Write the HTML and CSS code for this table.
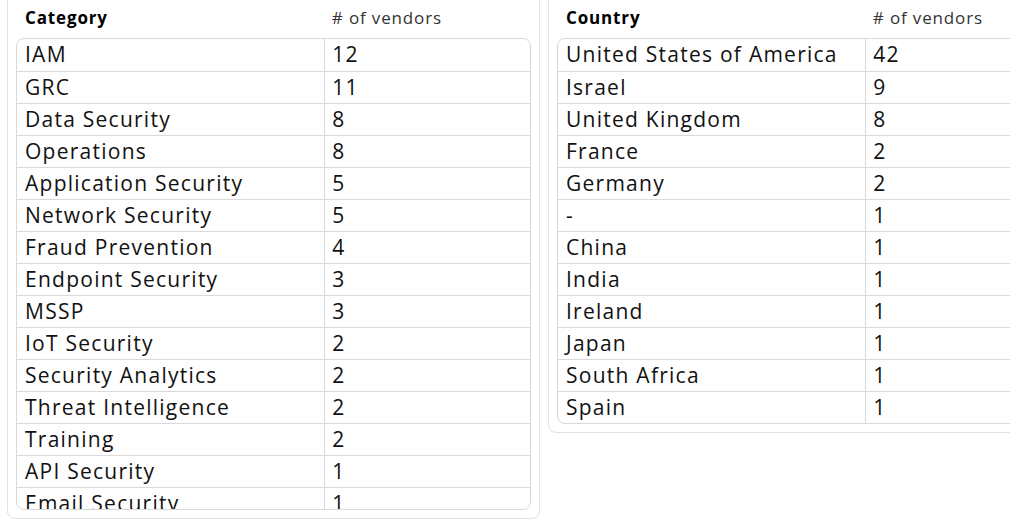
FILE: index.html
```html
<!DOCTYPE html>
<html lang="en">
<head>
<meta charset="utf-8">
<title>Vendors</title>
<link rel="stylesheet" href="styles.css">
</head>
<body>
<div class="page">
  <section class="card">
    <div class="card-head">
      <div class="head-cell head-key">Category</div>
      <div class="head-cell head-val"># of vendors</div>
    </div>
    <div class="table-wrap">
      <table class="data">
        <tbody>
          <tr><td>IAM</td><td>12</td></tr>
          <tr><td>GRC</td><td>11</td></tr>
          <tr><td>Data Security</td><td>8</td></tr>
          <tr><td>Operations</td><td>8</td></tr>
          <tr><td>Application Security</td><td>5</td></tr>
          <tr><td>Network Security</td><td>5</td></tr>
          <tr><td>Fraud Prevention</td><td>4</td></tr>
          <tr><td>Endpoint Security</td><td>3</td></tr>
          <tr><td>MSSP</td><td>3</td></tr>
          <tr><td>IoT Security</td><td>2</td></tr>
          <tr><td>Security Analytics</td><td>2</td></tr>
          <tr><td>Threat Intelligence</td><td>2</td></tr>
          <tr><td>Training</td><td>2</td></tr>
          <tr><td>API Security</td><td>1</td></tr>
          <tr><td>Email Security</td><td>1</td></tr>
        </tbody>
      </table>
    </div>
  </section>
  <section class="card">
    <div class="card-head">
      <div class="head-cell head-key">Country</div>
      <div class="head-cell head-val"># of vendors</div>
    </div>
    <div class="table-wrap">
      <table class="data">
        <tbody>
          <tr><td>United States of America</td><td>42</td></tr>
          <tr><td>Israel</td><td>9</td></tr>
          <tr><td>United Kingdom</td><td>8</td></tr>
          <tr><td>France</td><td>2</td></tr>
          <tr><td>Germany</td><td>2</td></tr>
          <tr><td>-</td><td>1</td></tr>
          <tr><td>China</td><td>1</td></tr>
          <tr><td>India</td><td>1</td></tr>
          <tr><td>Ireland</td><td>1</td></tr>
          <tr><td>Japan</td><td>1</td></tr>
          <tr><td>South Africa</td><td>1</td></tr>
          <tr><td>Spain</td><td>1</td></tr>
        </tbody>
      </table>
    </div>
  </section>
</div>
</body>
</html>
```
FILE: styles.css
```css
* { box-sizing: border-box; }
html, body { margin: 0; padding: 0; background: #ffffff; }
body {
  font-family: "Open Sans", "Liberation Sans", sans-serif;
  color: #111111;
  overflow: hidden;
}
.page {
  display: grid;
  grid-template-columns: 533px 533px;
  column-gap: 8px;
  align-items: start;
  padding-left: 7px;
  margin-top: -8px;
}
.card {
  border: 1px solid #e3e3e3;
  border-radius: 8px;
  padding: 8px;
}
.card-head {
  display: grid;
  grid-template-columns: 60% 40%;
  height: 32px;
  align-items: center;
  margin-bottom: 5px;
  padding: 0 1px;
}
.head-cell {
  padding: 0 8px;
  font-size: 17px;
  letter-spacing: 0.85px;
  white-space: nowrap;
}
.head-key { font-weight: 700; color: #000; }
.head-val { font-weight: 400; color: #333; padding-left: 7px; }
.table-wrap {
  border: 1px solid #d9d9d9;
  border-radius: 8px;
  max-height: 472px;
  overflow: hidden;
}
.data {
  width: 100%;
  border-collapse: collapse;
  table-layout: fixed;
}
.data td {
  height: 32px;
  padding: 0 8px;
  font-size: 21px;
  letter-spacing: 1.25px;
  line-height: 31px;
  white-space: nowrap;
  border-bottom: 1px solid #d9d9d9;
  vertical-align: middle;
}
.data tr:last-child td { border-bottom: none; }
.data td:first-child { width: 60%; border-right: 1px solid #d9d9d9; }
.data td:last-child { padding-left: 7px; }
```
